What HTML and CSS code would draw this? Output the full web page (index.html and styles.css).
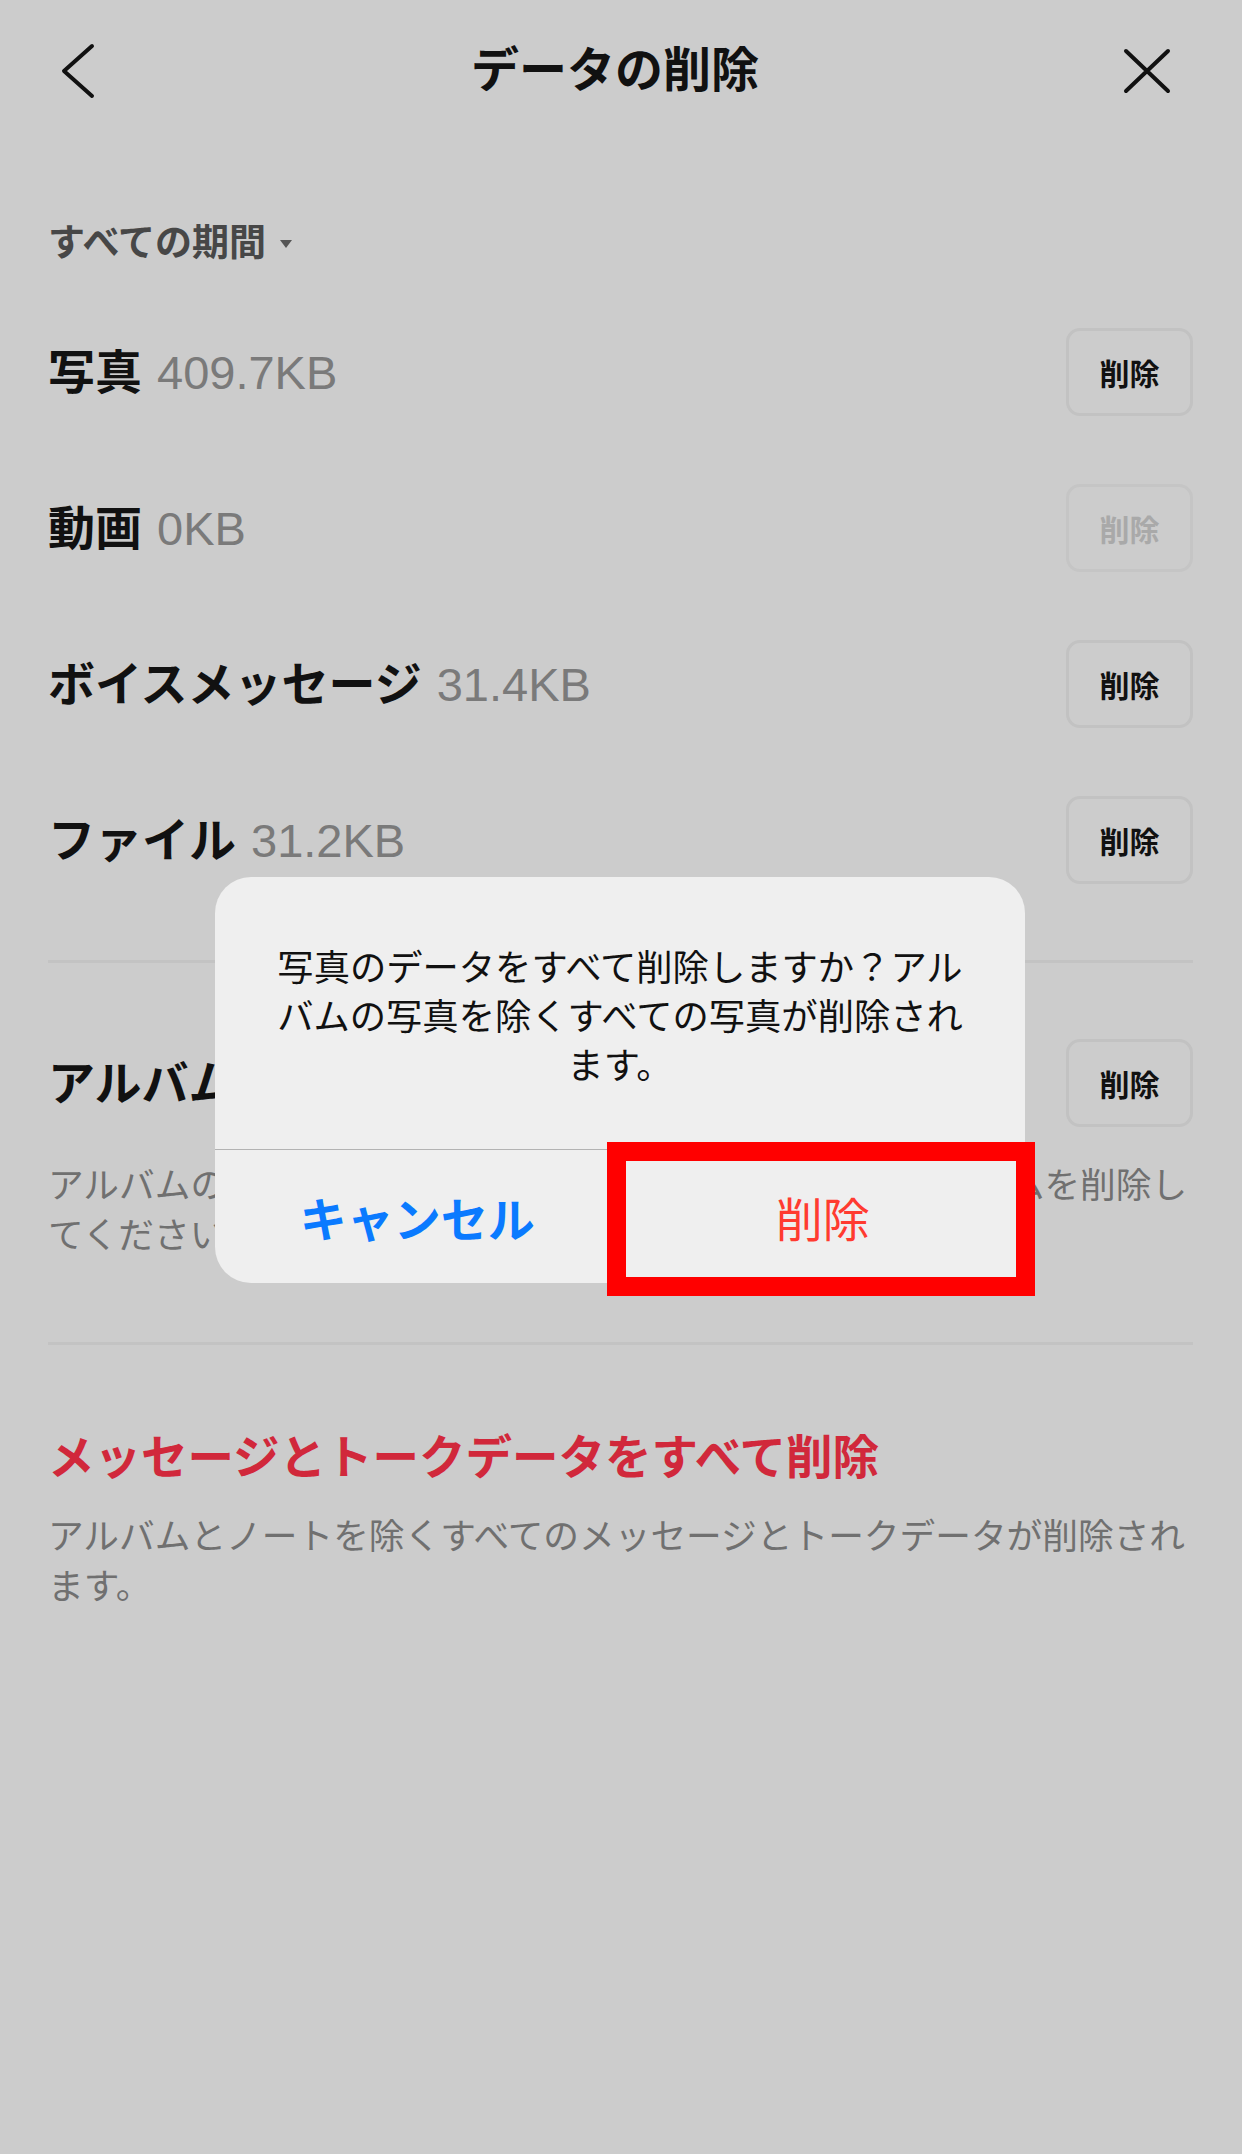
FILE: index.html
```html
<!DOCTYPE html>
<html lang="ja">
<head>
  <meta charset="UTF-8">
  <meta name="viewport" content="width=device-width, initial-scale=1.0">
  <title>データの削除</title>
  <link rel="stylesheet" href="styles.css">
</head>
<body>
  <header class="topbar">
    <svg class="icon back" width="40" height="60" viewBox="0 0 40 60">
      <path d="M34 5 L6 30 L34 55" />
    </svg>
    <h1>データの削除</h1>
    <svg class="icon close" width="50" height="50" viewBox="0 0 50 50">
      <path d="M4 5 L46 45 M46 5 L4 45" />
    </svg>
  </header>

  <main class="page">
    <div class="period">すべての期間<span class="caret"></span></div>

    <div class="row">
      <div class="name">写真<span class="size">409.7KB</span></div>
      <button class="del">削除</button>
    </div>
    <div class="row">
      <div class="name">動画<span class="size">0KB</span></div>
      <button class="del" disabled>削除</button>
    </div>
    <div class="row">
      <div class="name">ボイスメッセージ<span class="size">31.4KB</span></div>
      <button class="del">削除</button>
    </div>
    <div class="row">
      <div class="name">ファイル<span class="size">31.2KB</span></div>
      <button class="del">削除</button>
    </div>

    <hr class="divider first">

    <div class="row">
      <div class="name">アルバム<span class="size">2.4MB</span></div>
      <button class="del">削除</button>
    </div>
    <p class="note">アルバムのデータを削除するには、トークルームで各アルバムを削除してください。</p>

    <hr class="divider second">

    <h2 class="danger">メッセージとトークデータをすべて削除</h2>
    <p class="note">アルバムとノートを除くすべてのメッセージとトークデータが削除されます。</p>
  </main>

  <div class="alert">
    <p class="alert-msg">写真のデータをすべて削除しますか？アルバムの写真を除くすべての写真が削除されます。</p>
    <div class="alert-actions">
      <button class="alert-btn cancel">キャンセル</button>
      <button class="alert-btn confirm">削除</button>
    </div>
  </div>
  <div class="highlight"></div>
</body>
</html>
```

FILE: styles.css
```css
body {
  margin: 0;
  width: 1242px;
  min-height: 2154px;
  position: relative;
  background: #cccccc;
  color: #111;
  font-family: "Liberation Sans", "Noto Sans CJK JP", sans-serif;
}

.topbar {
  height: 142px;
  display: grid;
  grid-template-columns: 1fr auto 1fr;
  align-items: center;
  padding: 0 70px 0 58px;
}
.topbar h1 {
  margin: 0;
  font-size: 48px;
  font-weight: bold;
  line-height: 1;
}
.icon path {
  fill: none;
  stroke: #111;
  stroke-width: 4;
  stroke-linecap: round;
  stroke-linejoin: round;
}
.close {
  justify-self: end;
}

.page {
  padding: 0 49px 0 48px;
}

.period {
  margin: 77px 0 25px;
  height: 50px;
  line-height: 50px;
  font-size: 37px;
  font-weight: bold;
  color: #474747;
  display: flex;
  align-items: center;
}
.caret {
  margin-left: 14px;
  width: 0;
  height: 0;
  border-left: 6px solid transparent;
  border-right: 6px solid transparent;
  border-top: 8px solid #555;
}

.row {
  height: 156px;
  display: flex;
  justify-content: space-between;
  align-items: center;
}
.name {
  font-size: 47px;
  font-weight: bold;
  line-height: 1;
  display: flex;
  align-items: baseline;
}
.size {
  margin-left: 15px;
  font-weight: normal;
  color: #7a7a7a;
}

.del {
  width: 127px;
  height: 88px;
  border: 3px solid #c2c2c2;
  border-radius: 14px;
  background: transparent;
  font-family: "Noto Sans CJK JP", sans-serif;
  font-size: 30px;
  font-weight: bold;
  color: #111;
  padding: 0;
}
.del:disabled {
  color: #a9a9a9;
  border-color: #c5c5c5;
}

.divider {
  border: 0;
  height: 3px;
  background: #c3c3c3;
  margin: 0;
}
.divider.first {
  margin-top: 42px;
  margin-bottom: 42px;
}
.divider.second {
  margin-top: 81px;
}

.note {
  margin: 0;
  font-size: 35.7px;
  line-height: 50px;
  color: #707070;
}

.danger {
  margin: 83px 0 24px;
  font-size: 46.5px;
  line-height: 60px;
  font-weight: bold;
  color: #d1283b;
}

.alert {
  position: absolute;
  left: 215px;
  top: 877px;
  width: 810px;
  height: 406px;
  background: #efefef;
  border-radius: 36px 36px 8px 36px;
  display: flex;
  flex-direction: column;
}
.alert-msg {
  margin: 0;
  height: 273px;
  box-sizing: border-box;
  padding: 67px 58px 0;
  font-size: 36.3px;
  line-height: 49px;
  text-align: center;
  color: #111;
  border-bottom: 1px solid #b3b3b3;
}
.alert-actions {
  flex: 1;
  display: flex;
}
.alert-btn {
  flex: 1;
  border: 0;
  background: transparent;
  font-family: "Noto Sans CJK JP", sans-serif;
  font-size: 47px;
  padding: 0;
}
.cancel {
  color: #0a7aff;
  font-weight: bold;
  border-right: 1px solid #b3b3b3;
}
.confirm {
  color: #ff3b30;
}

.highlight {
  position: absolute;
  left: 607px;
  top: 1142px;
  width: 428px;
  height: 154px;
  box-sizing: border-box;
  border: 19px solid #ff0000;
}
```
